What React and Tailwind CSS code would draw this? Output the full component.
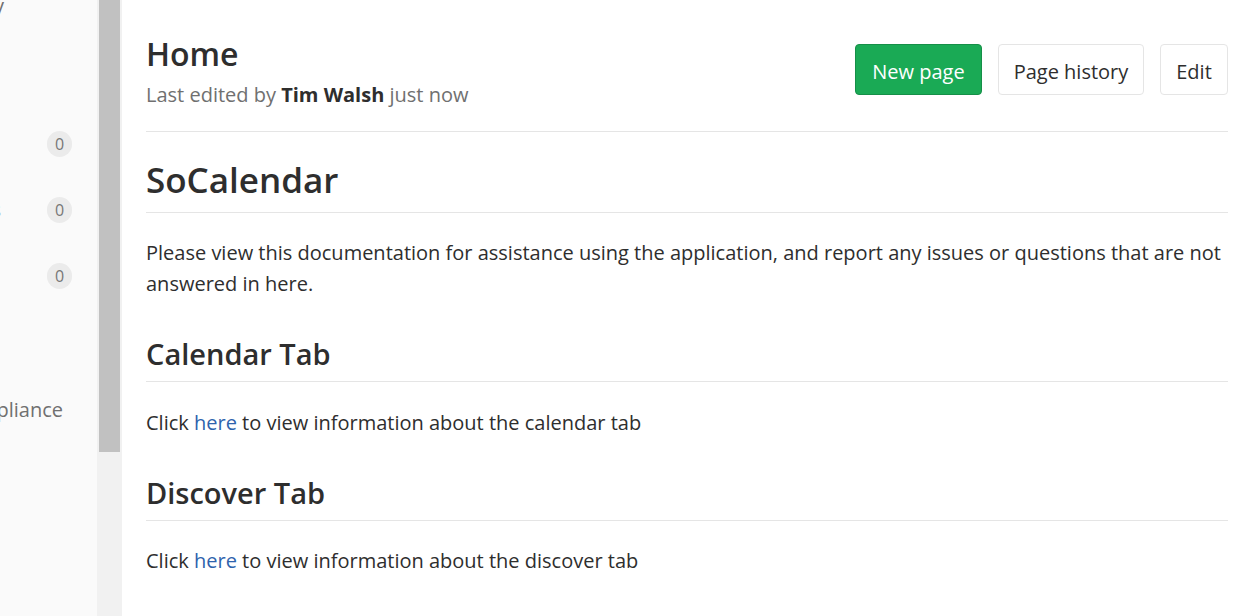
import React from "react";

function Badge() {
  return (
    <span className="flex h-[26px] w-[25px] items-center justify-center rounded-full bg-[#ebebeb] text-[16px] leading-none text-[#777]">
      0
    </span>
  );
}

export default function App() {
  return (
    <div
      className="flex h-[616px] w-[1248px] overflow-hidden bg-white text-[#2e2e2e]"
      style={{ fontFamily: '"Open Sans", "Noto Sans", sans-serif' }}
    >
      {/* Sidebar */}
      <div className="flex w-[97px] shrink-0 flex-col overflow-hidden bg-[#fafafa] text-[20px] text-[#707070]">
        <div className="-mt-[6px] flex h-[24px] leading-[24px]">
          <span className="-ml-[116px] w-[120px] shrink-0 whitespace-nowrap text-right">Activity</span>
        </div>
        <div className="h-[93px]" />
        <div className="flex h-[66px] items-center justify-between pr-[25px]">
          <span className="-ml-[116px] w-[100px] shrink-0 whitespace-nowrap text-right leading-[24px]">Issues</span>
          <Badge />
        </div>
        <div className="flex h-[66px] items-center justify-between pr-[25px]">
          <span className="-ml-[157px] w-[158px] shrink-0 whitespace-nowrap text-right leading-[24px]">Requests</span>
          <Badge />
        </div>
        <div className="flex h-[66px] items-center justify-between pr-[25px]">
          <span className="-ml-[156px] w-[100px] shrink-0 whitespace-nowrap text-right leading-[24px]">Requirements</span>
          <Badge />
        </div>
        <div className="h-[89px]" />
        <div className="flex h-[24px] leading-[24px]">
          <span className="-ml-[237px] w-[300px] shrink-0 whitespace-nowrap text-right">Security &amp; Compliance</span>
        </div>
      </div>

      {/* Scrollbar */}
      <div className="w-[25px] shrink-0 bg-[#f1f1f1] pl-[2px] pr-[2px]">
        <div className="h-[452px] bg-[#c1c1c1]" />
      </div>

      {/* Main */}
      <div className="flex-1 pl-[24px] pr-[20px] pt-[35px]">
        <div className="flex items-start justify-between border-b border-[#e5e5e5] pb-[24px]">
          <div>
            <h2 className="text-[32px] font-semibold leading-[38px] text-[#2e2e2e]">Home</h2>
            <div className="mt-[10px] text-[20px] leading-[24px] text-[#707070]">
              Last edited by <strong className="font-bold text-[#2e2e2e]">Tim Walsh</strong> just now
            </div>
          </div>
          <div className="mt-[9px] flex gap-[16px]">
            <button className="flex h-[51px] w-[127px] items-center justify-center rounded-[4px] border border-[#168f48] bg-[#1aaa55] pt-[4px] text-[20px] text-white">
              New page
            </button>
            <button className="flex h-[51px] w-[146px] items-center justify-center rounded-[4px] border border-[#e5e5e5] bg-white pt-[4px] text-[20px] text-[#2e2e2e]">
              Page history
            </button>
            <button className="flex h-[51px] w-[68px] items-center justify-center rounded-[4px] border border-[#e5e5e5] bg-white pt-[4px] text-[20px] text-[#2e2e2e]">
              Edit
            </button>
          </div>
        </div>

        <h1 className="mt-[25px] border-b border-[#e5e5e5] pb-[9px] text-[35px] font-semibold leading-[46px]">
          SoCalendar
        </h1>
        <p className="mt-[24px] text-[20px] leading-[31px]">
          Please view this documentation for assistance using the application, and report any issues or questions that are not answered in here.
        </p>

        <h2 className="mt-[37px] border-b border-[#e5e5e5] pb-[9px] text-[29px] font-semibold leading-[36px]">
          Calendar Tab
        </h2>
        <p className="mt-[25px] text-[20px] leading-[31px]">
          Click <a className="text-[#2e63ad]">here</a> to view information about the calendar tab
        </p>

        <h2 className="mt-[37px] border-b border-[#e5e5e5] pb-[9px] text-[29px] font-semibold leading-[36px]">
          Discover Tab
        </h2>
        <p className="mt-[24px] text-[20px] leading-[31px]">
          Click <a className="text-[#2e63ad]">here</a> to view information about the discover tab
        </p>
      </div>
    </div>
  );
}
